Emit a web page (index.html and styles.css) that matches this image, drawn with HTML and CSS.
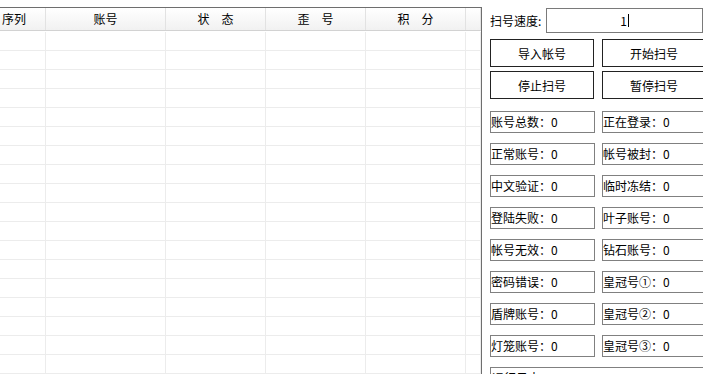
FILE: index.html
```html
<!DOCTYPE html>
<html>

<head>
  <title>扫号工具</title>
  <link rel="stylesheet" href="styles.css">
</head>

<body>
  <div class="app">
    <div class="grid-pane">
      <div class="grid-head">
        <div class="hcell first">序列</div>
        <div class="hcell">账号</div>
        <div class="hcell">状　态</div>
        <div class="hcell">歪　号</div>
        <div class="hcell">积　分</div>
        <div class="hcell"></div>
      </div>
      <div class="grid-body" id="grid-body"></div>
    </div>

    <div class="side">
      <div class="speed-row">
        <span class="speed-label">扫号速度:</span>
        <div class="speed-input">1<span class="caret"></span></div>
      </div>

      <div class="btn-grid">
        <button class="btn">导入帐号</button>
        <button class="btn">开始扫号</button>
        <button class="btn">停止扫号</button>
        <button class="btn">暂停扫号</button>
      </div>

      <div class="stat-grid">
        <div class="stat">账号总数：0</div>
        <div class="stat">正在登录：0</div>
        <div class="stat">正常账号：0</div>
        <div class="stat">帐号被封：0</div>
        <div class="stat">中文验证：0</div>
        <div class="stat">临时冻结：0</div>
        <div class="stat">登陆失败：0</div>
        <div class="stat">叶子账号：0</div>
        <div class="stat">帐号无效：0</div>
        <div class="stat">钻石账号：0</div>
        <div class="stat">密码错误：0</div>
        <div class="stat">皇冠号①：0</div>
        <div class="stat">盾牌账号：0</div>
        <div class="stat">皇冠号②：0</div>
        <div class="stat">灯笼账号：0</div>
        <div class="stat">皇冠号③：0</div>
      </div>

      <div class="log-box">运行日志</div>
    </div>
  </div>

  <script>
    // empty rows of the account list
    const body = document.getElementById('grid-body');
    for (let i = 0; i < 18; i++) {
      let row = '<div class="grid-row">';
      for (let c = 0; c < 6; c++) {
        row += '<div class="cell"></div>';
      }
      body.innerHTML += row + '</div>';
    }
  </script>
</body>

</html>
```

FILE: styles.css
```css
body {
  margin: 0;
  background-color: #fff;
  font-family: "Noto Sans CJK SC", "Liberation Sans", sans-serif;
  font-size: 12px;
  color: #000;
  overflow: hidden;
}

.app {
  display: flex;
  height: 374px;
  overflow: hidden;
}

/* account list */
.grid-pane {
  flex: none;
  width: 482px;
  margin-top: 7px;
  border-top: 1px solid #6e6e6e;
  border-right: 1px solid #6e6e6e;
  box-sizing: border-box;
  overflow: hidden;
}

.grid-head,
.grid-row {
  display: grid;
  grid-template-columns: 46px 120px 100px 100px 100px 15px;
}

.grid-head {
  height: 23px;
  background: linear-gradient(#fff, #f1f1f1);
  border-bottom: 1px solid #d2d2d2;
  box-sizing: border-box;
}

.hcell {
  border-right: 1px solid #e2e2e2;
  display: flex;
  align-items: center;
  justify-content: center;
  line-height: 22px;
}

.hcell.first {
  justify-content: flex-start;
  padding-left: 2px;
}

.grid-body {
  padding-top: 1px;
}

.grid-row {
  height: 19px;
  border-bottom: 1px solid #ececec;
  box-sizing: border-box;
}

.cell {
  border-right: 1px solid #ececec;
}

/* control panel */
.side {
  flex: 1;
  padding: 8px 0 0 8px;
  overflow: hidden;
}

.speed-row {
  display: flex;
  align-items: center;
  height: 25px;
}

.speed-label {
  width: 56px;
  flex: none;
}

.speed-input {
  flex: 1;
  height: 25px;
  border: 1px solid #7a7a7a;
  box-sizing: border-box;
  display: flex;
  align-items: center;
  justify-content: center;
}

.caret {
  display: inline-block;
  width: 1px;
  height: 13px;
  background-color: #000;
  margin-left: 1px;
}

.btn-grid {
  display: grid;
  grid-template-columns: 104px 104px;
  column-gap: 8px;
  row-gap: 4px;
  margin-top: 6px;
}

.btn {
  height: 28px;
  background-color: #fff;
  border: 1px solid #222;
  font-family: inherit;
  font-size: 12px;
  color: #000;
  padding: 0;
}

.stat-grid {
  display: grid;
  grid-template-columns: 105px 105px;
  column-gap: 7px;
  row-gap: 10px;
  margin-top: 12px;
}

.stat {
  height: 22px;
  border: 1px solid #808080;
  box-sizing: border-box;
  line-height: 20px;
  white-space: nowrap;
}

.log-box {
  width: 230px;
  height: 40px;
  margin-top: 10px;
  border: 1px solid #808080;
  box-sizing: border-box;
  padding: 0 1px;
  line-height: 20px;
}
```
